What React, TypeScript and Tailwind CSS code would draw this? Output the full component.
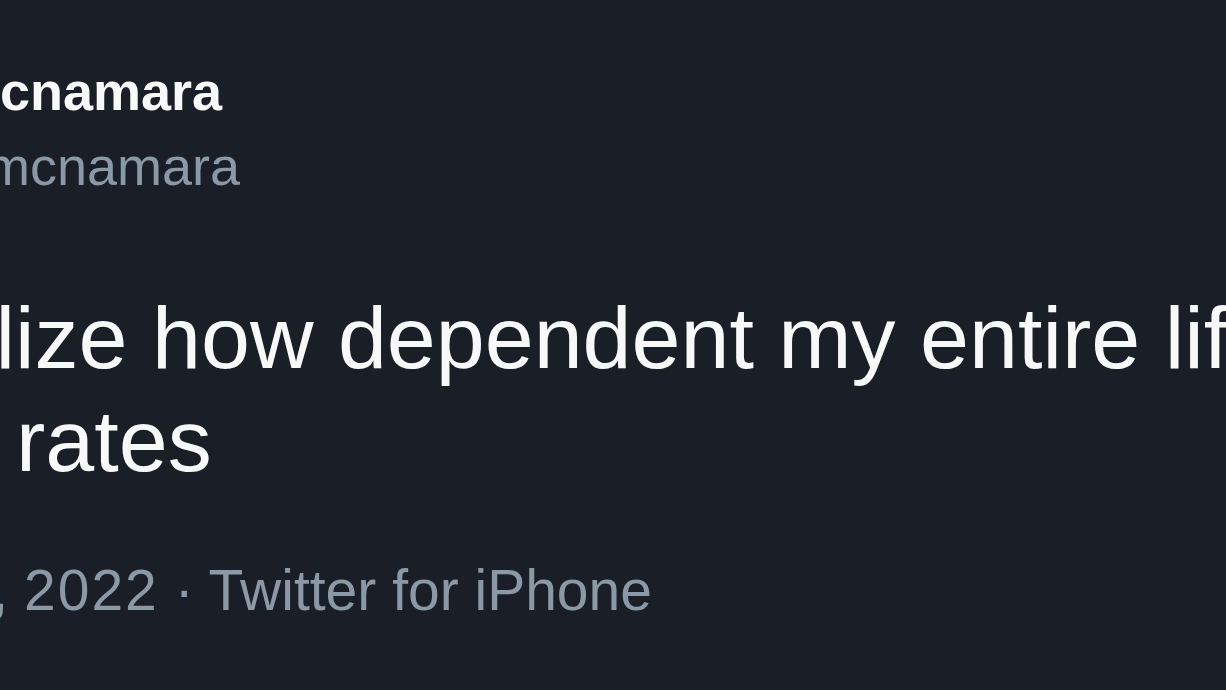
type ClippedProps = {
  anchor: string;
  hidden: string;
  shown: string;
  className: string;
  shownClass?: string;
  tail?: string;
};

// the tweet is cropped on the left: the hidden head overflows off-screen, the rest starts at `anchor`
function ClippedLine({ anchor, hidden, shown, className, shownClass, tail }: ClippedProps) {
  return (
    <div className={`flex whitespace-nowrap ${className}`}>
      <div className={`flex shrink-0 justify-end ${anchor}`}>
        <span>{hidden}</span>
      </div>
      <span className={shownClass}>{shown}</span>
      {tail && <span>{tail}</span>}
    </div>
  );
}

export default function App() {
  return (
    <div className="h-[690px] w-full overflow-hidden bg-[#1a1e27] font-['Liberation_Sans',Arial,sans-serif]">
      <div className="pt-[54px]">
        <ClippedLine
          anchor="w-0"
          hidden="Pat M"
          shown="cnamara"
          className="text-[54px] font-bold leading-[75px] text-[#f7f9f9]"
        />
        <ClippedLine
          anchor="w-[30px]"
          hidden="@patm"
          shown="cnamara"
          className="text-[54px] leading-[75px] text-[#8b98a5]"
        />

        <div className="mt-[82px] text-[88px] leading-[103px] text-[#f7f9f9]">
          <ClippedLine
            anchor="w-[152px]"
            hidden={"I didn’t realize\u00a0"}
            shown="how dependent my entire life was"
            className=""
          />
          <ClippedLine
            anchor="w-[16px]"
            hidden={"on interest\u00a0"}
            shown="rates"
            className=""
          />
        </div>

        <ClippedLine
          anchor="w-[24px]"
          hidden={"10:14 AM · Jun 14,\u00a0"}
          shown="2022"
          shownClass="tracking-[2px]"
          tail={"\u00a0· Twitter for iPhone"}
          className="mt-[61px] text-[57px] leading-[75px] text-[#8b98a5]"
        />
      </div>
    </div>
  );
}
